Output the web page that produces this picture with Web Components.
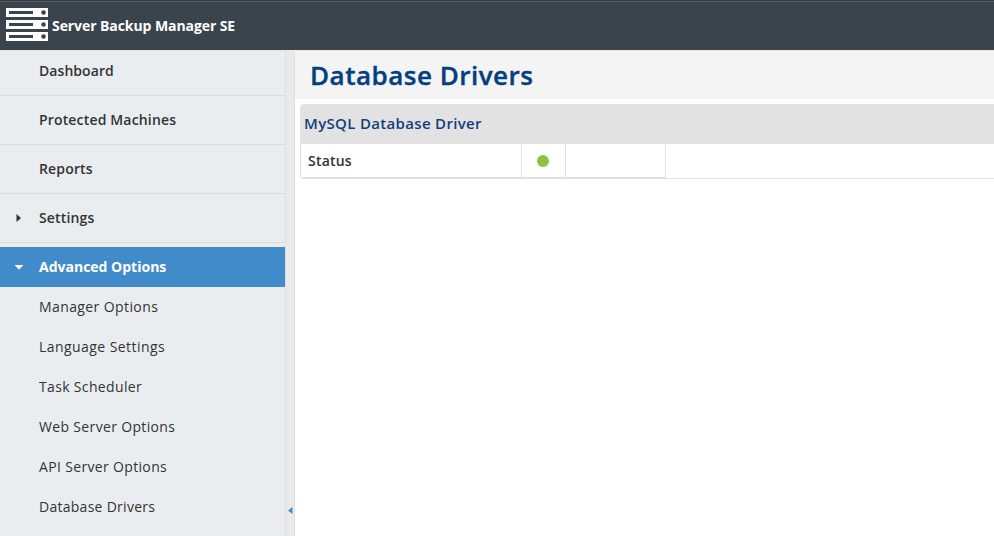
<!DOCTYPE html>
<html lang="en">
<head>
<meta charset="utf-8">
<title>Server Backup Manager SE</title>
<style>
html,body{margin:0;height:100%;overflow:hidden;background:#fff}
body{font-family:"Open Sans","Noto Sans",sans-serif;font-size:14px;color:#333}
</style>
</head>
<body>
<sbm-app>
  <sbm-header slot="header">Server Backup Manager SE</sbm-header>
  <sbm-nav slot="nav">
    <nav-item style="--ls:.06px">Dashboard</nav-item>
    <nav-item>Protected Machines</nav-item>
    <nav-item>Reports</nav-item>
    <nav-item state="closed">Settings</nav-item>
    <nav-item state="open">Advanced Options</nav-item>
    <nav-sub style="--ls:.4px">Manager Options</nav-sub>
    <nav-sub style="--ls:.44px">Language Settings</nav-sub>
    <nav-sub>Task Scheduler</nav-sub>
    <nav-sub>Web Server Options</nav-sub>
    <nav-sub>API Server Options</nav-sub>
    <nav-sub style="--ls:.27px">Database Drivers</nav-sub>
  </sbm-nav>
  <page-title>Database Drivers</page-title>
  <driver-panel><span slot="title">MySQL Database Driver</span><span slot="label">Status</span></driver-panel>
</sbm-app>
<script>
const define = (name, html) => customElements.define(name, class extends HTMLElement {
  constructor() {
    super();
    this.attachShadow({mode: 'open'}).innerHTML = html;
  }
});
define('sbm-app', `<style>
:host{display:grid;grid-template:50px 1fr/286px 8px 1fr;height:100vh;overflow:hidden}
.head{grid-column:1/-1}
.nav{background:#e9edf0;border-right:1px solid #dedfe0;border-top:1px solid #e1e2e3;overflow:hidden}
.split{background:#eaeaea;border-top:1px solid #e1e2e3;display:flex;justify-content:center;align-items:flex-start;overflow:hidden}
.split svg{margin:456px 0 0 1px;display:block;flex:none}
main{border-left:1px solid #dedede;border-top:1px solid #e4e4e4;background:#fff;border-radius:3px 0 0 0;overflow:hidden;min-width:0}
</style><div class="head"><slot name="header"></slot></div>
<div class="nav"><slot name="nav"></slot></div>
<div class="split"><svg width="5" height="8" viewBox="0 0 5 8"><path d="M0 3.5L4.5 0V7Z" fill="#428bca"/></svg></div>
<main><slot></slot></main>`);
define('sbm-header', `<style>
:host{display:flex;align-items:center;height:50px;box-sizing:border-box;background:linear-gradient(#353e45 1px,#5a5d61 1px,#5a5d61 2px,#3a444c 2px);color:#fff;font-weight:700;padding-left:6px;gap:4px;letter-spacing:-.08px;line-height:20px}
svg{display:block;flex:none}
span{padding-top:2px}
</style><svg width="42" height="34" viewBox="0 0 42 34"><g fill="#fff"><path d="M0 0H42V9H0ZM0 12H42V21H0ZM0 24H42V33H0Z"/></g><g fill="#3a444c"><path d="M3 3H27V6H3ZM3 15H27V18H3ZM3 27H27V30H3Z"/><circle cx="37.5" cy="4.5" r="2.3"/><circle cx="37.5" cy="16.5" r="2.3"/><circle cx="37.5" cy="28.5" r="2.3"/></g></svg><span><slot></slot></span>`);
define('sbm-nav', `<style>:host{display:flex;flex-direction:column}</style><slot></slot>`);
define('nav-item', `<style>
:host{display:grid;grid-template-columns:39px 1fr;align-items:center;height:48px;border-bottom:1px solid #d9dbdd;font-weight:600;letter-spacing:var(--ls,.16px);line-height:20px;flex:none}
:host(:first-child){height:40px;padding-bottom:4px}
svg{display:none;grid-area:1/1;justify-self:start;margin-left:14px}
span{grid-column:2}
:host([state=open]){height:40px;margin-top:4px;border:0;background:#428bca;color:#fff;font-weight:700;letter-spacing:0}
:host([state=closed]) .c,:host([state=open]) .o{display:block}
</style><svg class="c" width="10" height="10"><path d="M2.5 1L7 5L2.5 9Z" fill="#333"/></svg><svg class="o" width="10" height="10"><path d="M.5 3H9.5L5 7.5Z" fill="#fff"/></svg><span><slot></slot></span>`);
define('nav-sub', `<style>:host{display:flex;align-items:center;height:40px;padding-left:39px;line-height:20px;flex:none;letter-spacing:var(--ls,.34px)}</style><slot></slot>`);
define('page-title', `<style>:host{display:flex;align-items:center;height:48px;background:#f4f4f4;padding-left:15px;color:#04407f;font-size:26px;font-weight:600;letter-spacing:.5px;-webkit-text-stroke:.4px #04407f;line-height:36px;box-sizing:border-box}</style><slot></slot>`);
define('driver-panel', `<style>
:host{display:block;margin:5px 0 0 5px;border-left:1px solid #e1e1e1;border-bottom:1px solid #e1e1e1;border-radius:4px 0 0 4px;overflow:hidden;height:75px;box-sizing:border-box}
h2{margin:0;height:40px;box-sizing:border-box;background:#e2e2e2;color:#123f7c;font-size:15px;font-weight:600;letter-spacing:.33px;line-height:38px;padding-left:3px}
.row{display:grid;grid-template-columns:221px 44px 100px;height:34px;width:365px}
.row>div{border-right:1px solid #e1e1e1;border-bottom:1px solid #e1e1e1;display:flex;align-items:center;box-sizing:border-box}
.label{padding-left:7px;font-weight:600;letter-spacing:.2px;line-height:20px;padding-top:1px}
.dot{justify-content:center}
i{display:block;width:12px;height:12px;border-radius:50%;background:#8bc53f;margin:1px 1px 0 0}
</style><h2><slot name="title"></slot></h2><div class="row"><div class="label"><slot name="label"></slot></div><div class="dot"><i></i></div><div></div></div>`);
</script>
</body>
</html>
